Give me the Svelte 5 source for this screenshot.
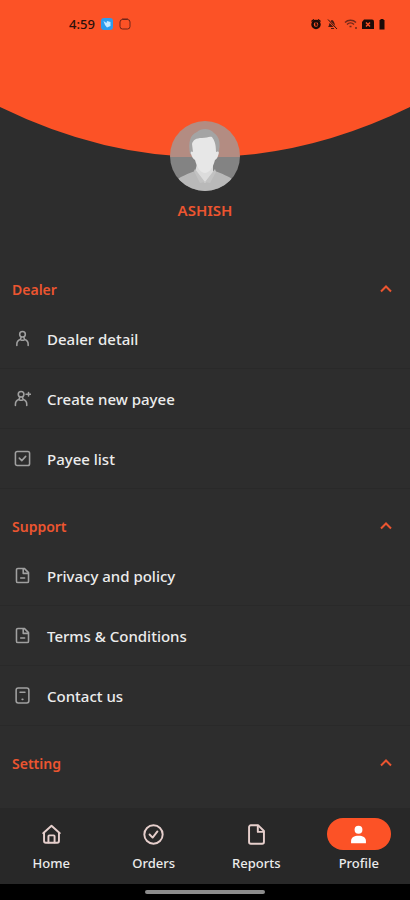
<script>
  const sections = [
    {
      title: 'Dealer',
      items: [
        { label: 'Dealer detail', icon: 'person' },
        { label: 'Create new payee', icon: 'person-add' },
        { label: 'Payee list', icon: 'check-box' },
      ],
    },
    {
      title: 'Support',
      items: [
        { label: 'Privacy and policy', icon: 'document' },
        { label: 'Terms & Conditions', icon: 'document' },
        { label: 'Contact us', icon: 'contact' },
      ],
    },
    { title: 'Setting', items: [] },
  ];
  const tabs = [
    { label: 'Home', icon: 'home' },
    { label: 'Orders', icon: 'orders' },
    { label: 'Reports', icon: 'reports' },
    { label: 'Profile', icon: 'profile' },
  ];
  let active = $state('Profile');
</script>

{#snippet glyph(name)}
  <svg class="glyph" viewBox="0 0 24 24" aria-hidden="true">
    {#if name === 'person'}
      <circle cx="12" cy="6" r="4" />
      <path d="M4 22v-2c0-4 2-5.500 5-6.500L10 10.500M20 22v-2c0-4-2-5.500-5-6.500L14 10.500M9 13.500q3 2 6 0" />
    {:else if name === 'person-add'}
      <circle cx="10" cy="6" r="4" />
      <path d="M2 22v-2c0-4 2-5.500 5-6.500L8 10.500M18 22v-2c0-4-2-5.500-5-6.500L12 10.500M7 13.500q3 2 6 0M17 6h6.500M20.500 3.500v5" />
    {:else if name === 'check-box'}
      <rect x="2" y="2" width="20" height="20" rx="2.500" />
      <path d="M7.500 11.500l3.500 3.500 5.500-6" />
    {:else if name === 'document'}
      <path d="M5.500 2h9l6 6v12a2 2 0 0 1-2 2h-13a2 2 0 0 1-2-2V4a2 2 0 0 1 2-2z" />
      <path d="M13 2.500v6.500h7M9.500 15.500h5.500" />
    {:else if name === 'contact'}
      <rect x="3" y="1.500" width="18" height="21" rx="3" />
      <path d="M8.500 7.500h7M11.500 17.500h1" />
    {:else if name === 'home'}
      <path d="M2.500 10.500L12 2l9.500 8.500M3.500 10v9.500a2 2 0 0 0 2 2h13a2 2 0 0 0 2-2V10" />
      <path d="M8.500 21v-7a1 1 0 0 1 1-1h5a1 1 0 0 1 1 1v7" />
    {:else if name === 'orders'}
      <circle cx="12" cy="12" r="10.500" />
      <path d="M7.500 12l3.500 3.500 5.500-7" />
    {:else if name === 'reports'}
      <path d="M5.500 1.500h8.500l6.500 6.500v12.500a2 2 0 0 1-2 2h-13a2 2 0 0 1-2-2v-17a2 2 0 0 1 2-2z" />
      <path d="M13.500 2v7h6.500" />
    {:else if name === 'profile'}
      <circle class="solid" cx="12" cy="6.500" r="4.500" />
      <path class="solid" d="M3.500 22v-2.500c0-4 3.500-6 8.500-6s8.500 2 8.500 6V22z" />
    {/if}
  </svg>
{/snippet}

<div class="screen">
  <header>
    <svg class="arc" viewBox="0 0 410 157" preserveAspectRatio="none" aria-hidden="true">
      <path d="M0 0H410V107Q205 207 0 107Z" fill="#fc5226" />
    </svg>
    <div class="status">
      <div class="cluster">
        <span>4:59</span>
        <svg class="badge" viewBox="0 0 12 12" aria-hidden="true">
          <rect width="12" height="12" rx="3" fill="#2d9bed" />
          <path d="M2.500 3l3 2 .5-2 3.500 1v4L6 9.500 4 7z" fill="#c5e8ff" />
        </svg>
        <svg class="badge" viewBox="0 0 12 12" aria-hidden="true">
          <rect x="1" y="1.500" width="10" height="9.500" rx="2.500" fill="none" stroke="#6e2418" />
          <path d="M3 1h6" stroke="#6e2418" />
        </svg>
      </div>
      <svg class="indicators" viewBox="0 0 76 14" aria-hidden="true">
        <circle cx="6" cy="7.500" r="3.500" fill="none" stroke="#1b0b08" stroke-width="2.500" />
        <path d="M1.500 4.500l2.500-2M10.500 4.500L8 2.500M6 5.500v2.500h1.500" fill="none" stroke="#1b0b08" stroke-width="1.500" />
        <path d="M18 10c1.500-1 1-6 4-7 3 1 2.500 6 4 7zM21 11h3v1h-3z" fill="#4b1b12" />
        <path d="M18 3l9 9" stroke="#fc5226" stroke-width="2" />
        <path d="M18 2.500l9 9.500" stroke="#35120c" />
        <path d="M35 5.500c3-3 8-3 11 0M37 7.500c2-2 5-2 7 0M39.500 9.500h2M46 10v2" fill="none" stroke="#72281a" stroke-width="1.500" />
        <path d="M54 2.500h8q2 0 2 2V12H52V5z" fill="#1b0b08" />
        <path d="M56 5.500l4 4M60 5.500l-4 4" stroke="#fc5226" stroke-width="1.500" />
        <path d="M70.500 2h3v1h1v9.500h-5V3h1z" fill="#1b0b08" />
      </svg>
    </div>
    <svg class="avatar" viewBox="0 0 70 70" role="img" aria-label="Profile photo">
      <defs><clipPath id="face"><circle cx="35" cy="35" r="35" /></clipPath></defs>
      <g clip-path="url(#face)">
        <rect width="70" height="36" fill="#b38c82" />
        <rect y="36" width="70" height="34" fill="#838383" />
        <path d="M7 59c4-4 11-6 18-9h20c7 3 14 5 18 9v11H7z" fill="#b9b9b9" />
        <path d="M27 43h16v9L35 62 25 51z" fill="#dcdcdc" />
        <path d="M20 33c-2-12 0-19 7-22 4-4 13-4 17 1 6 4 7 12 4 21z" fill="#a4a4a4" />
        <path d="M22 23c1-4 4-6 10-6 5 0 7-2 10-1 2 3 4 6 4 15 2-1 4-1 2 4-1 3-2 3-3 4-2 8-6 13-10 13s-8-5-10-13c-2-1-3-3-4-6-1-3 1-3 2-2z" fill="#e7e7e7" />
        <path d="M24 50l1-2 10 13 10-13 1 3-6 11-5-1-5 1z" fill="#c2c2c2" />
      </g>
    </svg>
    <h1>ASHISH</h1>
  </header>

  <main>
    {#each sections as section}
      <section>
        <h2>
          <button class="heading" type="button" aria-expanded="true">
            {section.title}
            <svg class="chevron" viewBox="0 0 12 8" aria-hidden="true"><path d="M1 6.500l5-5 5 5" /></svg>
          </button>
        </h2>
        {#each section.items as item}
          <a class="row" href="#{item.icon}">{@render glyph(item.icon)}<span>{item.label}</span></a>
        {/each}
      </section>
    {/each}
  </main>

  <nav>
    {#each tabs as tab}
      <button class="tab" class:active={active === tab.label} type="button" onclick={() => (active = tab.label)}>
        <span class="pill">{@render glyph(tab.icon)}</span>
        <span>{tab.label}</span>
      </button>
    {/each}
  </nav>
  <div class="gesture"><span></span></div>
</div>

<style>
  :global(body) { background: #2d2d2d; }
  .screen {
    display: flex;
    flex-direction: column;
    min-height: 100vh;
    background: #2d2d2d;
    color: #ececec;
    font-family: 'Noto Sans', 'Open Sans', sans-serif;
    font-size: 15px;
    font-weight: 500;
  }
  header {
    position: relative;
    display: flex;
    flex-direction: column;
    align-items: center;
  }
  .arc {
    position: absolute;
    top: 0;
    left: 0;
    width: 100%;
    height: 157px;
  }
  .status {
    position: relative;
    box-sizing: border-box;
    width: 100%;
    height: 48px;
    padding: 0 24px 0 69px;
    display: flex;
    align-items: center;
    justify-content: space-between;
    color: #2a100b;
    font-size: 13px;
  }
  .cluster { display: flex; align-items: center; gap: 6px; }
  .badge { width: 12px; height: 12px; }
  .indicators { width: 76px; height: 14px; }
  .avatar {
    position: relative;
    width: 70px;
    height: 70px;
    margin-top: 73px;
  }
  h1 {
    margin: 9px 0 0;
    color: #ec5530;
    font-size: 15px;
    font-weight: 600;
    line-height: 20px;
  }
  main { flex: 1; padding-top: 49px; }
  section { margin-bottom: 17px; }
  section:last-child { margin-bottom: 0; }
  h2 { margin: 0; font: inherit; }
  button {
    border: 0;
    padding: 0;
    background: none;
    color: inherit;
    font: inherit;
    cursor: pointer;
  }
  .heading {
    box-sizing: border-box;
    width: 100%;
    height: 40px;
    padding: 0 18px 0 12px;
    display: flex;
    align-items: center;
    justify-content: space-between;
    color: #ec5530;
    font-size: 14px;
    font-weight: 600;
  }
  .chevron { width: 12px; height: 8px; fill: none; stroke: #ec5530; stroke-width: 2; }
  .row {
    box-sizing: border-box;
    height: 60px;
    padding: 0 14px;
    display: flex;
    align-items: center;
    gap: 16px;
    border-bottom: 1px solid #292929;
    color: inherit;
    text-decoration: none;
  }
  .glyph {
    width: 17px;
    height: 17px;
    flex: none;
    fill: none;
    stroke: #a0a0a0;
    stroke-width: 2.2;
    stroke-linecap: round;
    stroke-linejoin: round;
  }
  nav {
    display: flex;
    padding: 10px 0 12px;
    background: #282828;
  }
  .tab {
    flex: 1;
    display: flex;
    flex-direction: column;
    align-items: center;
    gap: 4px;
    font-size: 13px;
    line-height: 18px;
  }
  .pill {
    width: 64px;
    height: 32px;
    border-radius: 16px;
    display: flex;
    align-items: center;
    justify-content: center;
  }
  .pill .glyph { width: 21px; height: 21px; stroke: #e6cfcc; }
  .active .pill { background: #fc5226; }
  .pill .solid { fill: #fff; stroke: none; }
  .gesture {
    height: 16px;
    display: flex;
    align-items: center;
    justify-content: center;
    background: #000;
  }
  .gesture span { width: 120px; height: 4px; border-radius: 2px; background: #8c8c8c; }
</style>
